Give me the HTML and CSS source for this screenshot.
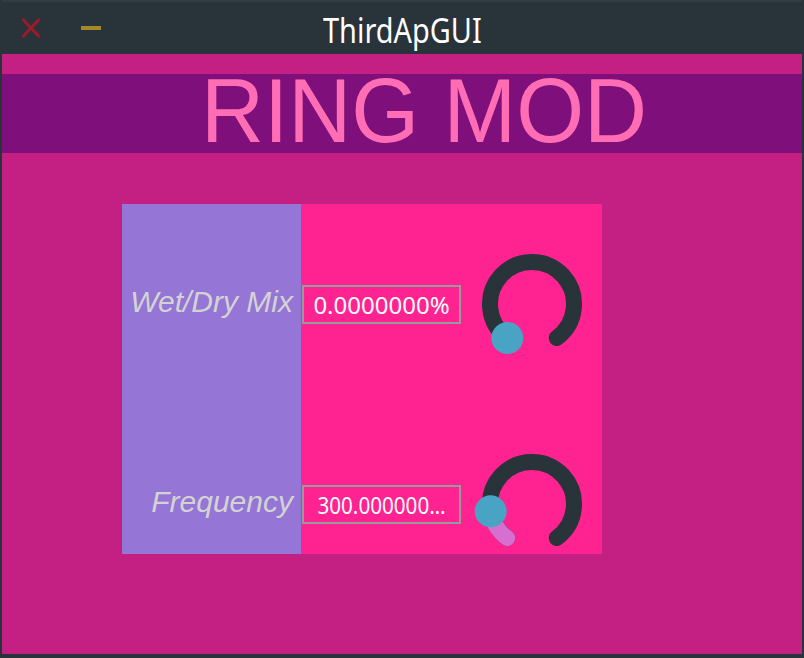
FILE: index.html
```html
<!DOCTYPE html>
<html lang="en">
<head>
<meta charset="utf-8">
<title>ThirdApGUI</title>
<link rel="stylesheet" href="styles.css">
</head>
<body>
<div class="window">
  <div class="titlebar">
    <div class="win-controls">
      <svg class="close-icon" width="20" height="20" viewBox="0 0 20 20">
        <line x1="1.5" y1="1" x2="18.5" y2="19" stroke="#9a1b2b" stroke-width="3"/>
        <line x1="18.5" y1="1" x2="1.5" y2="19" stroke="#9a1b2b" stroke-width="3"/>
      </svg>
      <div class="min-icon"></div>
    </div>
    <div class="title"><span class="title-text">ThirdApGUI</span></div>
    <div></div>
  </div>
  <div class="content">
    <div class="banner"><h1 class="banner-text">RING MOD</h1></div>
    <div class="panel">
      <div class="labels">
        <div class="label-row"><span class="label">Wet/Dry Mix</span></div>
        <div class="label-row"><span class="label">Frequency</span></div>
      </div>
      <div class="controls">
        <div class="control-row">
          <div class="value-box"><span class="value-text">0.0000000%</span></div>
          <svg class="knob" width="100" height="100" viewBox="0 0 100 100">
            <path d="M25.31 83.98 A42 42 0 1 1 74.69 83.98" fill="none" stroke="#29333a" stroke-width="16" stroke-linecap="round"/>
            <circle cx="25.31" cy="83.98" r="16" fill="#48a3c4"/>
          </svg>
        </div>
        <div class="control-row">
          <div class="value-box"><span class="value-text squeezed">300.000000…</span></div>
          <svg class="knob" width="100" height="100" viewBox="0 0 100 100">
            <path d="M25.31 83.98 A42 42 0 1 1 74.69 83.98" fill="none" stroke="#29333a" stroke-width="16" stroke-linecap="round"/>
            <path d="M25.31 83.98 A42 42 0 0 1 8.64 57.29" fill="none" stroke="#d76fd1" stroke-width="16" stroke-linecap="round"/>
            <circle cx="8.64" cy="57.29" r="16" fill="#48a3c4"/>
          </svg>
        </div>
      </div>
    </div>
  </div>
</div>
</body>
</html>
```
FILE: styles.css
```css
html, body {
  margin: 0;
  padding: 0;
  background: #29333a;
}

.window {
  width: 804px;
  height: 658px;
  box-sizing: border-box;
  padding: 0 2px 4px 2px;
  background: #29333a;
  display: flex;
  flex-direction: column;
  overflow: hidden;
}

.titlebar {
  height: 54px;
  flex: none;
  box-sizing: border-box;
  border-top: 2px solid #323c43;
  display: grid;
  grid-template-columns: 1fr auto 1fr;
  align-items: center;
}

.win-controls {
  display: flex;
  align-items: center;
  gap: 40px;
  padding-left: 19px;
}

.close-icon {
  display: block;
}

.min-icon {
  width: 20px;
  height: 3.5px;
  background: #a4882a;
}

.title {
  font-family: "Noto Sans", "Open Sans", sans-serif;
  font-size: 34px;
  color: #ffffff;
  padding-top: 3px;
  line-height: 48px;
}

.title-text {
  display: inline-block;
  transform: scaleX(0.85);
}

.content {
  flex: 1;
  background: #c41f82;
  display: flex;
  flex-direction: column;
}

.banner {
  margin-top: 20px;
  height: 79px;
  background: #7f0f7a;
  display: flex;
  align-items: center;
  justify-content: center;
  padding-left: 43px;
  padding-bottom: 5px;
  box-sizing: border-box;
}

.banner-text {
  margin: 0;
  font-family: "Liberation Sans", Arial, sans-serif;
  font-weight: normal;
  font-size: 90px;
  line-height: 79px;
  color: #ff6db4;
  white-space: nowrap;
  transform: scaleX(0.97);
}

.panel {
  margin-top: 51px;
  margin-left: 120px;
  width: 480px;
  height: 350px;
  display: flex;
  overflow: hidden;
}

.labels {
  width: 179px;
  background: #9575d6;
  flex: none;
}

.label-row {
  height: 200px;
  display: flex;
  align-items: center;
  justify-content: flex-end;
  padding-right: 8px;
  padding-bottom: 5px;
  box-sizing: border-box;
}

.label {
  font-family: "Liberation Sans", Arial, sans-serif;
  font-style: italic;
  font-size: 30px;
  color: #d3d3d3;
  white-space: nowrap;
}

.controls {
  flex: 1;
  background: #ff2291;
}

.control-row {
  height: 200px;
  display: flex;
  align-items: center;
  padding-left: 1px;
  gap: 21px;
}

.value-box {
  width: 159px;
  height: 39px;
  box-sizing: border-box;
  border: 2px solid #999a9c;
  display: flex;
  align-items: center;
  justify-content: center;
  font-family: "Noto Sans", "Open Sans", sans-serif;
  font-size: 24px;
  color: #ffffff;
  white-space: nowrap;
}

.value-text {
  display: inline-block;
}

.squeezed {
  transform: scaleX(0.86);
}

.knob {
  display: block;
  flex: none;
  overflow: visible;
}
```
